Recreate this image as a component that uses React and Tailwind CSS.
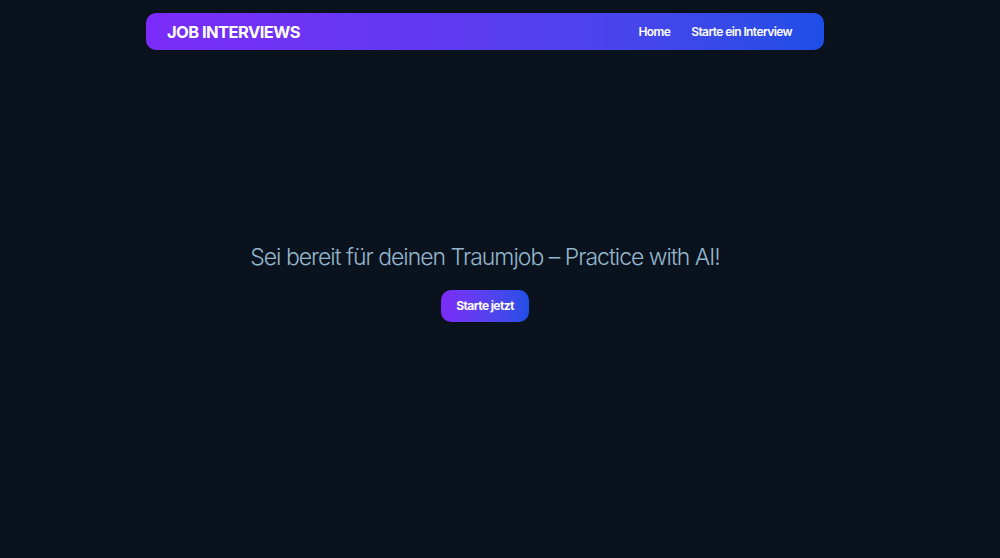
export default function App() {
  return (
    <div className="min-h-[558px] w-full bg-[#0a121e] font-['Inter',sans-serif]">
      <div className="ml-[146px] w-[678px] pt-[13px]">
        {/* Navbar */}
        <nav className="flex h-[37px] items-center justify-between rounded-[10px] bg-gradient-to-r from-[#7b2bf9] via-[#5a3bf0] to-[#1d4ee6] pl-[21px] pr-[32px] pt-[1px]">
          <span className="text-[16.5px] font-bold tracking-[-0.55px] text-white">JOB INTERVIEWS</span>
          <div className="flex items-center gap-[21px] text-[12px] font-semibold tracking-[-0.6px] text-white">
            <a>Home</a>
            <a>Starte ein Interview</a>
          </div>
        </nav>

        {/* Hero */}
        <div className="flex flex-col items-center pt-[191px]">
          <h1 className="text-[23px] font-light leading-[32px] tracking-[-1px] text-[#93b6cc]">
            Sei bereit für deinen Traumjob – Practice with AI!
          </h1>
          <button className="mt-[17px] h-[32px] w-[88px] rounded-[10px] bg-gradient-to-r from-[#7b2bf9] to-[#1d4ee6] text-[12px] font-bold tracking-[-0.6px] text-white">
            Starte jetzt
          </button>
        </div>
      </div>
    </div>
  );
}
